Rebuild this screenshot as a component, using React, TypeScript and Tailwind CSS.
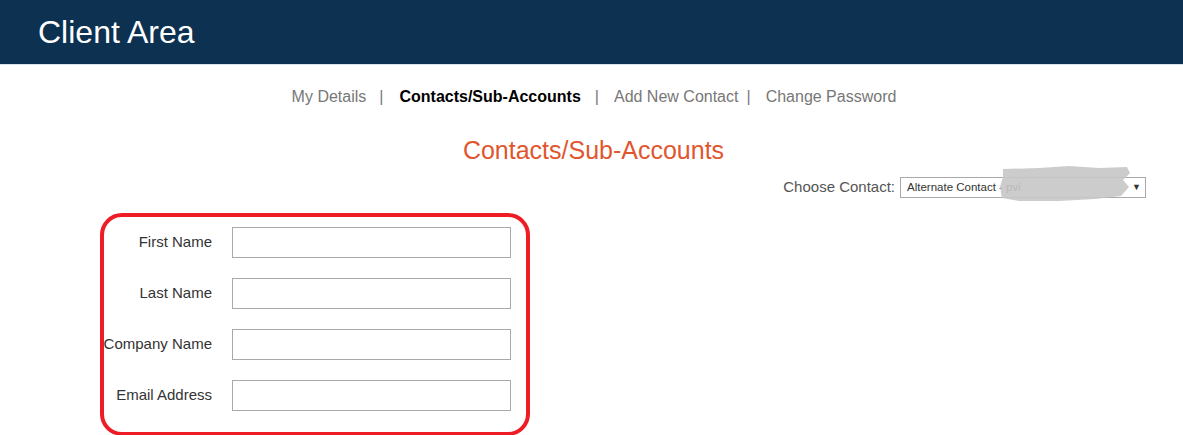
import React from 'react';

const fields = ['First Name', 'Last Name', 'Company Name', 'Email Address'];

export default function App() {
  return (
    <div className="min-h-[435px] w-full bg-white font-['Liberation_Sans',Arial,sans-serif]">
      {/* Header */}
      <header className="h-[65px] bg-[#0d3150] border-b border-[#d8e4ee] flex items-center pl-[38px]">
        <h1 className="text-white text-[32px] leading-none">Client Area</h1>
      </header>

      {/* Sub navigation */}
      <nav className="mt-[22px] pl-[5px] flex justify-center items-center text-[16px] leading-5 text-[#777]">
        <span>My Details</span>
        <span className="ml-[13px] mr-[16px]">|</span>
        <span className="font-bold text-black">Contacts/Sub-Accounts</span>
        <span className="ml-[14px] mr-[15px]">|</span>
        <span>Add New Contact</span>
        <span className="ml-[8px] mr-[15px]">|</span>
        <span>Change Password</span>
      </nav>

      <h2 className="mt-[29px] pl-[4px] text-center text-[25px] leading-[29px] text-[#e0562f]">Contacts/Sub-Accounts</h2>

      <div className="pl-[100px] pr-[37px]">
        {/* Contact chooser */}
        <div className="mt-[11px] flex justify-end items-center">
          <label className="text-[15px] text-[#555] mr-[5px]">Choose Contact:</label>
          <div className="relative w-[246px] h-[21px] border border-[#a9a9a9] bg-white flex items-center pl-[6px] text-[11.5px] text-[#333]">
            <span className="whitespace-nowrap overflow-hidden">Alternate Contact - pvi</span>
            <span className="absolute right-[4px] top-[3px] text-[9px] text-[#333]">▼</span>
            <svg
              className="absolute left-[98px] top-[-13px]"
              width="134"
              height="38"
              viewBox="0 0 134 38"
            >
              <path
                d="M4 4 L40 3 L70 1 L100 3 L128 2 L131 8 L124 15 L130 22 L122 31 L96 34 L60 36 L20 36 L3 33 L1 22 L4 12 Z"
                fill="#c6c6c6"
                fillOpacity="0.9"
              />
            </svg>
          </div>
        </div>

        {/* Form (annotated) */}
        <div className="mt-[14px] w-[430px] h-[223px] border-4 border-[#ee1c25] rounded-[22px] pt-[10px] pb-[21px]">
          <div className="flex flex-col gap-[20px]">
            {fields.map((f) => (
              <div key={f} className="flex items-center">
                <div className="w-[108px] flex justify-end">
                  <span className="whitespace-nowrap text-[15px] text-[#333]">{f}</span>
                </div>
                <input
                  type="text"
                  className="ml-[20px] w-[279px] h-[31px] border border-[#a9a9a9] bg-white outline-none"
                />
              </div>
            ))}
          </div>
        </div>
      </div>
    </div>
  );
}
